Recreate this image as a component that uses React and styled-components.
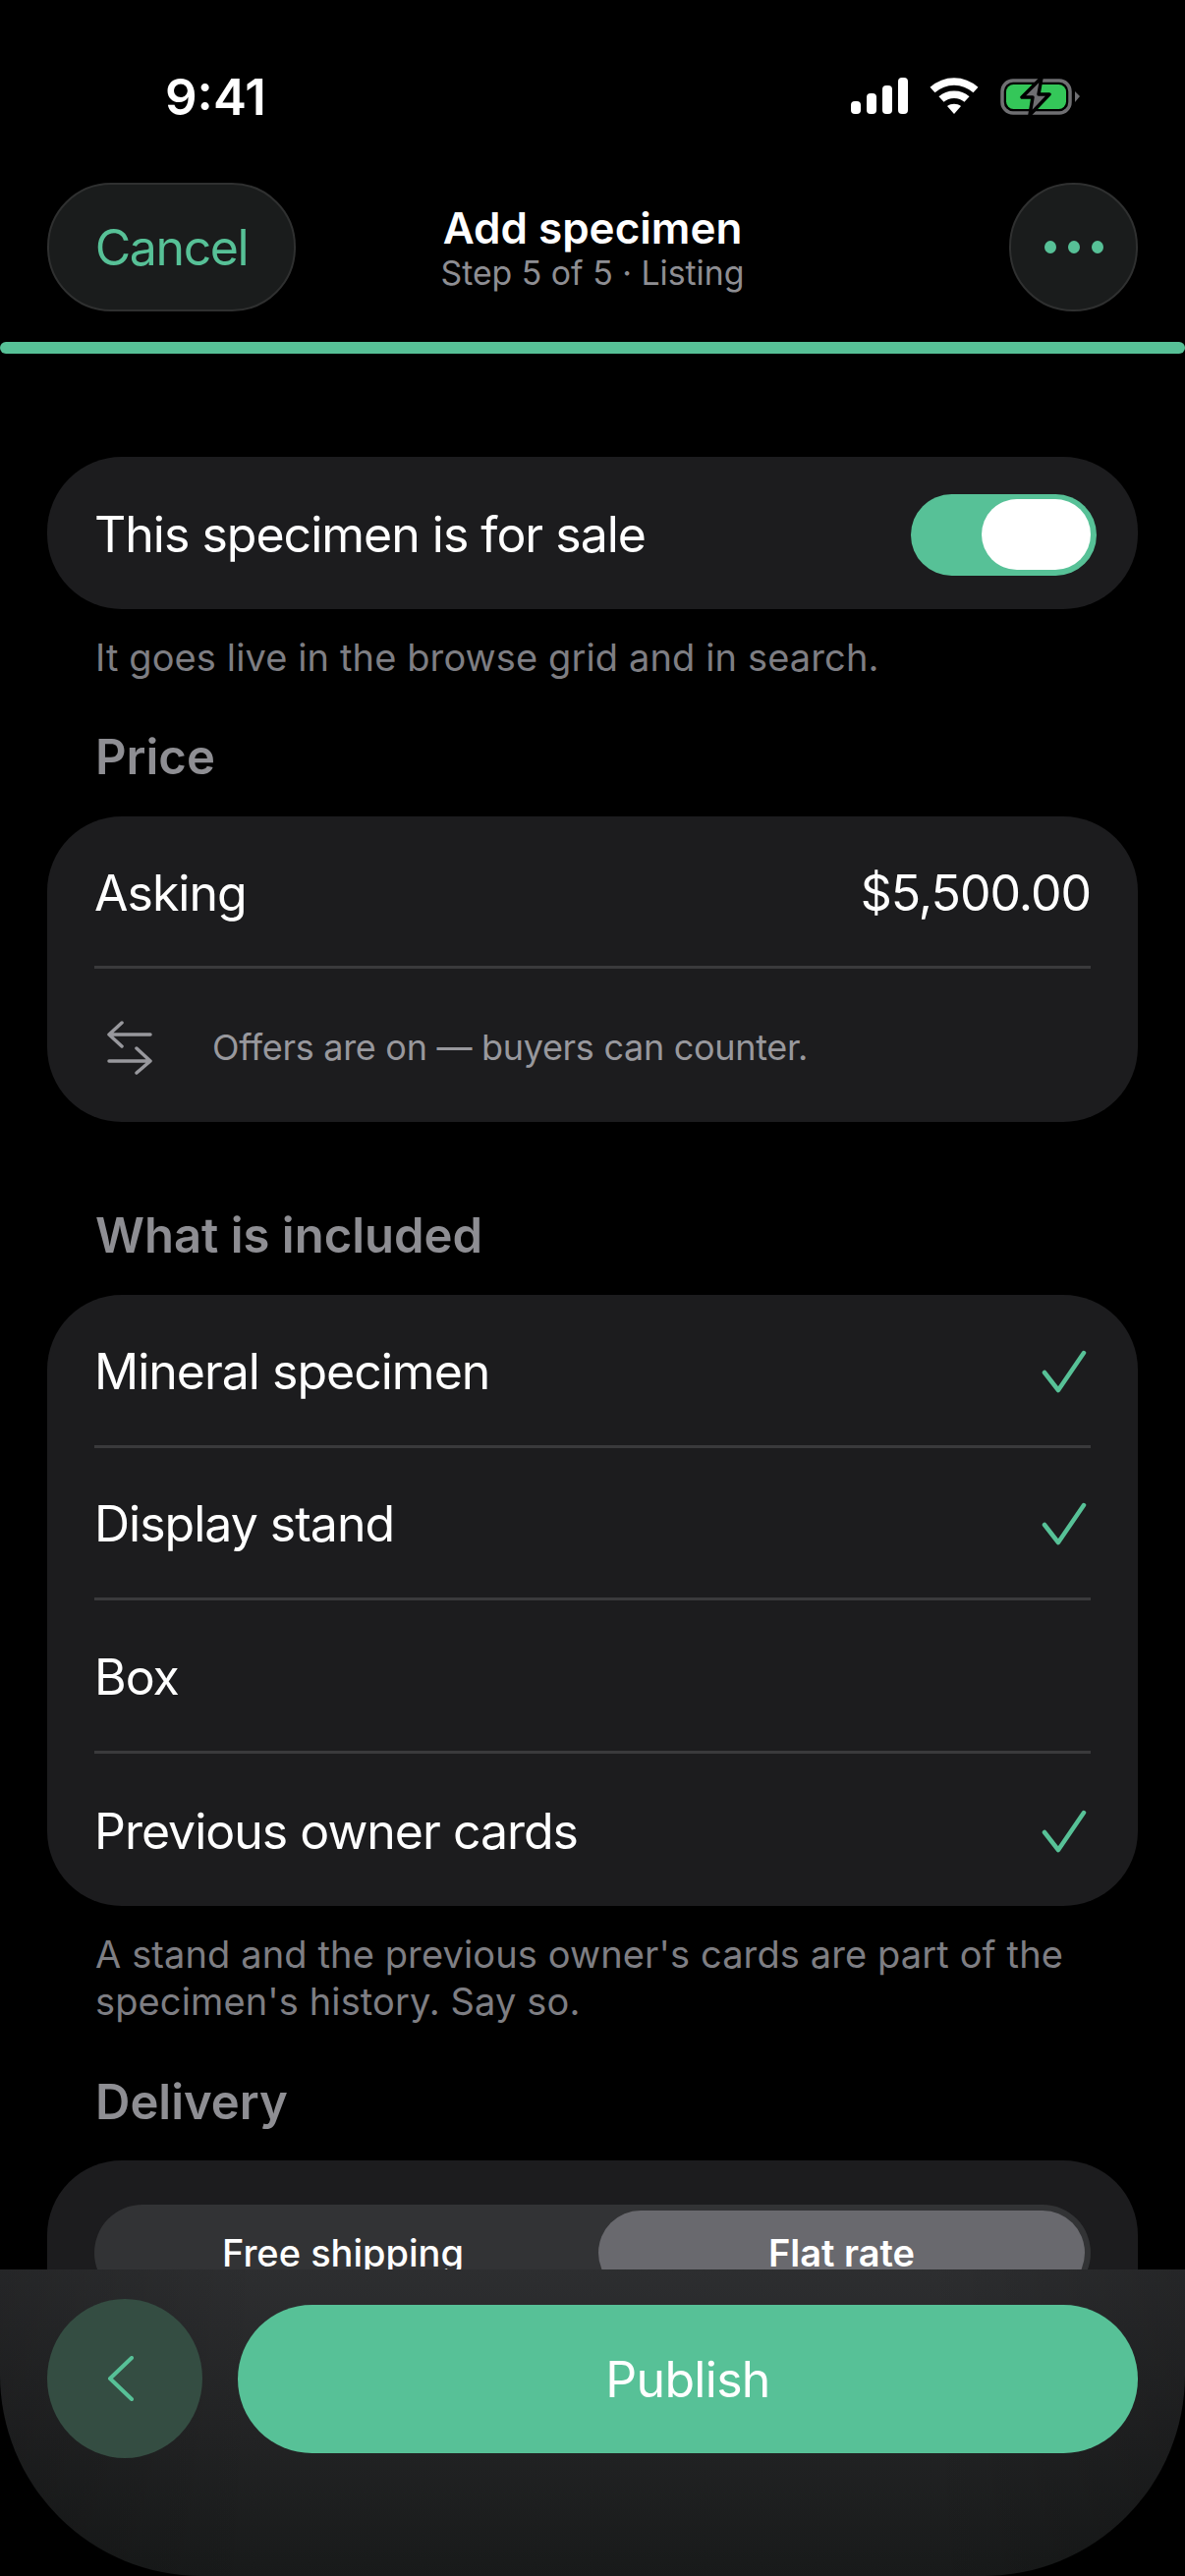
import styled, { createGlobalStyle } from "styled-components";

const green = "#57c197";
const grey = "#8e8e93";

const Global = createGlobalStyle`
  html, body {
    margin: 0;
    background: #000;
  }
  * {
    box-sizing: border-box;
  }
`;

const Page = styled.div`
  position: relative;
  width: 1206px;
  height: 2622px;
  overflow: hidden;
  background: #000;
  color: #fff;
  font-family: Inter, "Liberation Sans", sans-serif;
`;

const StatusBar = styled.div`
  display: flex;
  align-items: center;
  justify-content: space-between;
  height: 116px;
  margin-top: 40px;
  margin-bottom: 30px;
  padding: 0 106px 0 168px;
`;

const Time = styled.div`
  font-size: 51px;
  font-weight: 600;
`;

const StatusIcons = styled.div`
  display: flex;
  align-items: center;
  gap: 22px;
`;

const Nav = styled.header`
  display: grid;
  grid-template-columns: 1fr auto 1fr;
  align-items: center;
  padding: 0 48px;
`;

const NavButton = styled.button`
  display: flex;
  align-items: center;
  justify-content: center;
  justify-self: ${(p) => (p.$end ? "end" : "start")};
  gap: 12px;
  width: ${(p) => p.$w}px;
  height: 131px;
  padding: 0;
  border: 2px solid #2f3030;
  border-radius: 65px;
  background: #1a1c1c;
  color: ${green};
  font: 400 50px Inter, sans-serif;
  letter-spacing: -1.4px;
`;

const Dot = styled.span`
  width: 12px;
  height: 13px;
  border-radius: 50%;
  background: ${green};
`;

const Heading = styled.div`
  text-align: center;
`;

const Title = styled.div`
  font-size: 44px;
  font-weight: 600;
  line-height: 52px;
`;

const Subtitle = styled.div`
  font-size: 33.8px;
  line-height: 40px;
  color: ${grey};
`;

const Progress = styled.div`
  height: 12px;
  margin-top: 31px;
  border-radius: 6px;
  background: ${green};
`;

const Content = styled.main`
  padding: 105px 48px 0;
`;

const Card = styled.section`
  margin-top: ${(p) => p.$top || 0}px;
  padding: ${(p) => p.$padY || 0}px 48px ${(p) => p.$padY || 0}px 48px;
  border-radius: 76px;
  background: #1c1c1e;
`;

const Row = styled.div`
  display: flex;
  align-items: center;
  justify-content: space-between;
  height: ${(p) => p.$h || 155}px;
  padding-top: 3px;
  border-bottom: 3px solid #3a3a3c;
  font-size: 50px;
  letter-spacing: -1px;
  &:last-child {
    border-bottom: 0;
  }
`;

const OfferRow = styled(Row)`
  justify-content: flex-start;
  gap: 61px;
  padding-left: 13px;
  font-size: 36px;
  letter-spacing: -0.3px;
  color: #98989d;
`;

const Toggle = styled.div`
  display: flex;
  align-items: center;
  justify-content: flex-end;
  width: 189px;
  height: 83px;
  margin-right: -6px;
  padding-right: 6px;
  border-radius: 42px;
  background: ${green};
`;

const Knob = styled.div`
  width: 111px;
  height: 72px;
  border-radius: 36px;
  background: #fff;
`;

const Note = styled.p`
  margin: 0;
  padding: ${(p) => p.$top || 0}px 48px 0 49px;
  font-size: 38px;
  line-height: 48px;
  letter-spacing: 0.12px;
  color: #7e7e83;
`;

const SectionTitle = styled.h2`
  margin: ${(p) => p.$top}px 0 0;
  padding-left: 49px;
  font-size: 49px;
  font-weight: 600;
  line-height: 56px;
  color: ${grey};
`;

const Segments = styled.div`
  display: grid;
  grid-template-columns: 506px 495px;
  gap: 7px;
  height: 98px;
  padding: 6px 5px 6px 0;
  border-radius: 49px;
  background: #323335;
`;

const Segment = styled.div`
  display: flex;
  align-items: center;
  justify-content: center;
  border-radius: 46px;
  font-size: 38px;
  background: ${(p) => (p.$active ? "#69696e" : "transparent")};
  font-weight: ${(p) => (p.$active ? 600 : 500)};
`;

const BottomBar = styled.footer`
  position: absolute;
  left: 0;
  right: 0;
  bottom: 0;
  display: flex;
  gap: 36px;
  height: 312px;
  padding: 30px 48px 0;
  border-radius: 0 0 205px 205px;
  background:
    linear-gradient(90deg, rgba(0, 0, 0, 0.18), rgba(0, 0, 0, 0) 22%, rgba(0, 0, 0, 0) 78%, rgba(0, 0, 0, 0.18)),
    linear-gradient(#2d2e30 0%, #222324 55%, #181a1a 100%);
`;

const BackButton = styled.button`
  flex: none;
  display: flex;
  align-items: center;
  justify-content: center;
  width: 158px;
  height: 162px;
  padding: 0 8px 0 0;
  border: 0;
  border-radius: 50%;
  background: #344d42;
`;

const Publish = styled.button`
  flex: 1;
  height: 151px;
  margin-top: 6px;
  border: 0;
  border-radius: 76px;
  background: ${green};
  color: #fff;
  font: 400 50px Inter, sans-serif;
  letter-spacing: -0.7px;
`;

const CheckSlot = styled.span`
  display: flex;
  margin-right: 4px;
`;

function Signal() {
  return (
    <svg width="58" height="38" viewBox="0 0 58 38" fill="#fff">
      <rect x="0" y="24" width="10" height="13" rx="4" />
      <rect x="16" y="16" width="10" height="21" rx="4" />
      <rect x="32" y="8" width="10" height="29" rx="4" />
      <rect x="48" y="0" width="10" height="37" rx="4" />
    </svg>
  );
}

function Wifi() {
  return (
    <svg width="50" height="38" viewBox="0 0 50 38" fill="none">
      <path d="M3 12.5 C16 1 34 1 47 12.5" stroke="#fff" strokeWidth="7.5" />
      <path d="M12 22 C19 15.5 31 15.5 38 22" stroke="#fff" strokeWidth="7.5" />
      <path d="M18 29 C22 26 28 26 32 29 L25 37 Z" fill="#fff" />
    </svg>
  );
}

function Battery() {
  return (
    <svg width="82" height="40" viewBox="0 0 82 40" fill="none">
      <rect x="2" y="4" width="69" height="33" rx="11" stroke="#6f6f72" strokeWidth="3.5" />
      <rect x="6" y="8" width="61" height="25" rx="7.5" fill="#34c759" />
      <path d="M76 15 L81 20 L76 26 Z" fill="#6f6f72" />
      <path
        d="M42 1 L22 21 L33 21 L30 39 L50 18 L39 18 Z"
        fill="#6f6f72"
        stroke="#000"
        strokeWidth="3.5"
        strokeLinejoin="round"
      />
    </svg>
  );
}

function SwapIcon() {
  return (
    <svg width="46" height="56" viewBox="0 0 46 56" fill="none" stroke="#98989d" strokeWidth="3.5" strokeLinecap="round" strokeLinejoin="round">
      <path d="M2 15 H44 M15 3 L2 15 L15 27" />
      <path d="M2 42 H44 M30 29 L44 42 L30 54" />
    </svg>
  );
}

function Check() {
  return (
    <svg width="46" height="44" viewBox="0 0 46 44" fill="none" stroke={green} strokeWidth="4.5" strokeLinecap="round" strokeLinejoin="round">
      <path d="M3 23 L17 41 L43 3" />
    </svg>
  );
}

function Chevron() {
  return (
    <svg width="28" height="46" viewBox="0 0 28 46" fill="none" stroke={green} strokeWidth="4" strokeLinecap="round" strokeLinejoin="round">
      <path d="M25 2 L3 23 L25 44" />
    </svg>
  );
}

const included = [
  ["Mineral specimen", true],
  ["Display stand", true],
  ["Box", false],
  ["Previous owner cards", true],
];

export default function App() {
  return (
    <Page>
      <Global />
      <StatusBar>
        <Time>9:41</Time>
        <StatusIcons>
          <Signal />
          <Wifi />
          <Battery />
        </StatusIcons>
      </StatusBar>
      <Nav>
        <NavButton $w={253}>Cancel</NavButton>
        <Heading>
          <Title>Add specimen</Title>
          <Subtitle>Step 5 of 5 · Listing</Subtitle>
        </Heading>
        <NavButton $w={131} $end aria-label="More">
          <Dot />
          <Dot />
          <Dot />
        </NavButton>
      </Nav>
      <Progress />
      <Content>
        <Card>
          <Row>
            This specimen is for sale
            <Toggle>
              <Knob />
            </Toggle>
          </Row>
        </Card>
        <Note $top={25}>It goes live in the browse grid and in search.</Note>
        <SectionTitle $top={50}>Price</SectionTitle>
        <Card $top={32}>
          <Row>
            Asking
            <span>$5,500.00</span>
          </Row>
          <OfferRow $h={156}>
            <SwapIcon />
            Offers are on — buyers can counter.
          </OfferRow>
        </Card>
        <SectionTitle $top={88}>What is included</SectionTitle>
        <Card $top={32}>
          {included.map(([label, on]) => (
            <Row key={label} $h={155.5}>
              {label}
              {on && (
                <CheckSlot>
                  <Check />
                </CheckSlot>
              )}
            </Row>
          ))}
        </Card>
        <Note $top={25}>
          A stand and the previous owner's cards are part of the specimen's history. Say so.
        </Note>
        <SectionTitle $top={51}>Delivery</SectionTitle>
        <Card $top={31} $padY={45}>
          <Segments>
            <Segment>Free shipping</Segment>
            <Segment $active>Flat rate</Segment>
          </Segments>
        </Card>
      </Content>
      <BottomBar>
        <BackButton aria-label="Back">
          <Chevron />
        </BackButton>
        <Publish>Publish</Publish>
      </BottomBar>
    </Page>
  );
}
